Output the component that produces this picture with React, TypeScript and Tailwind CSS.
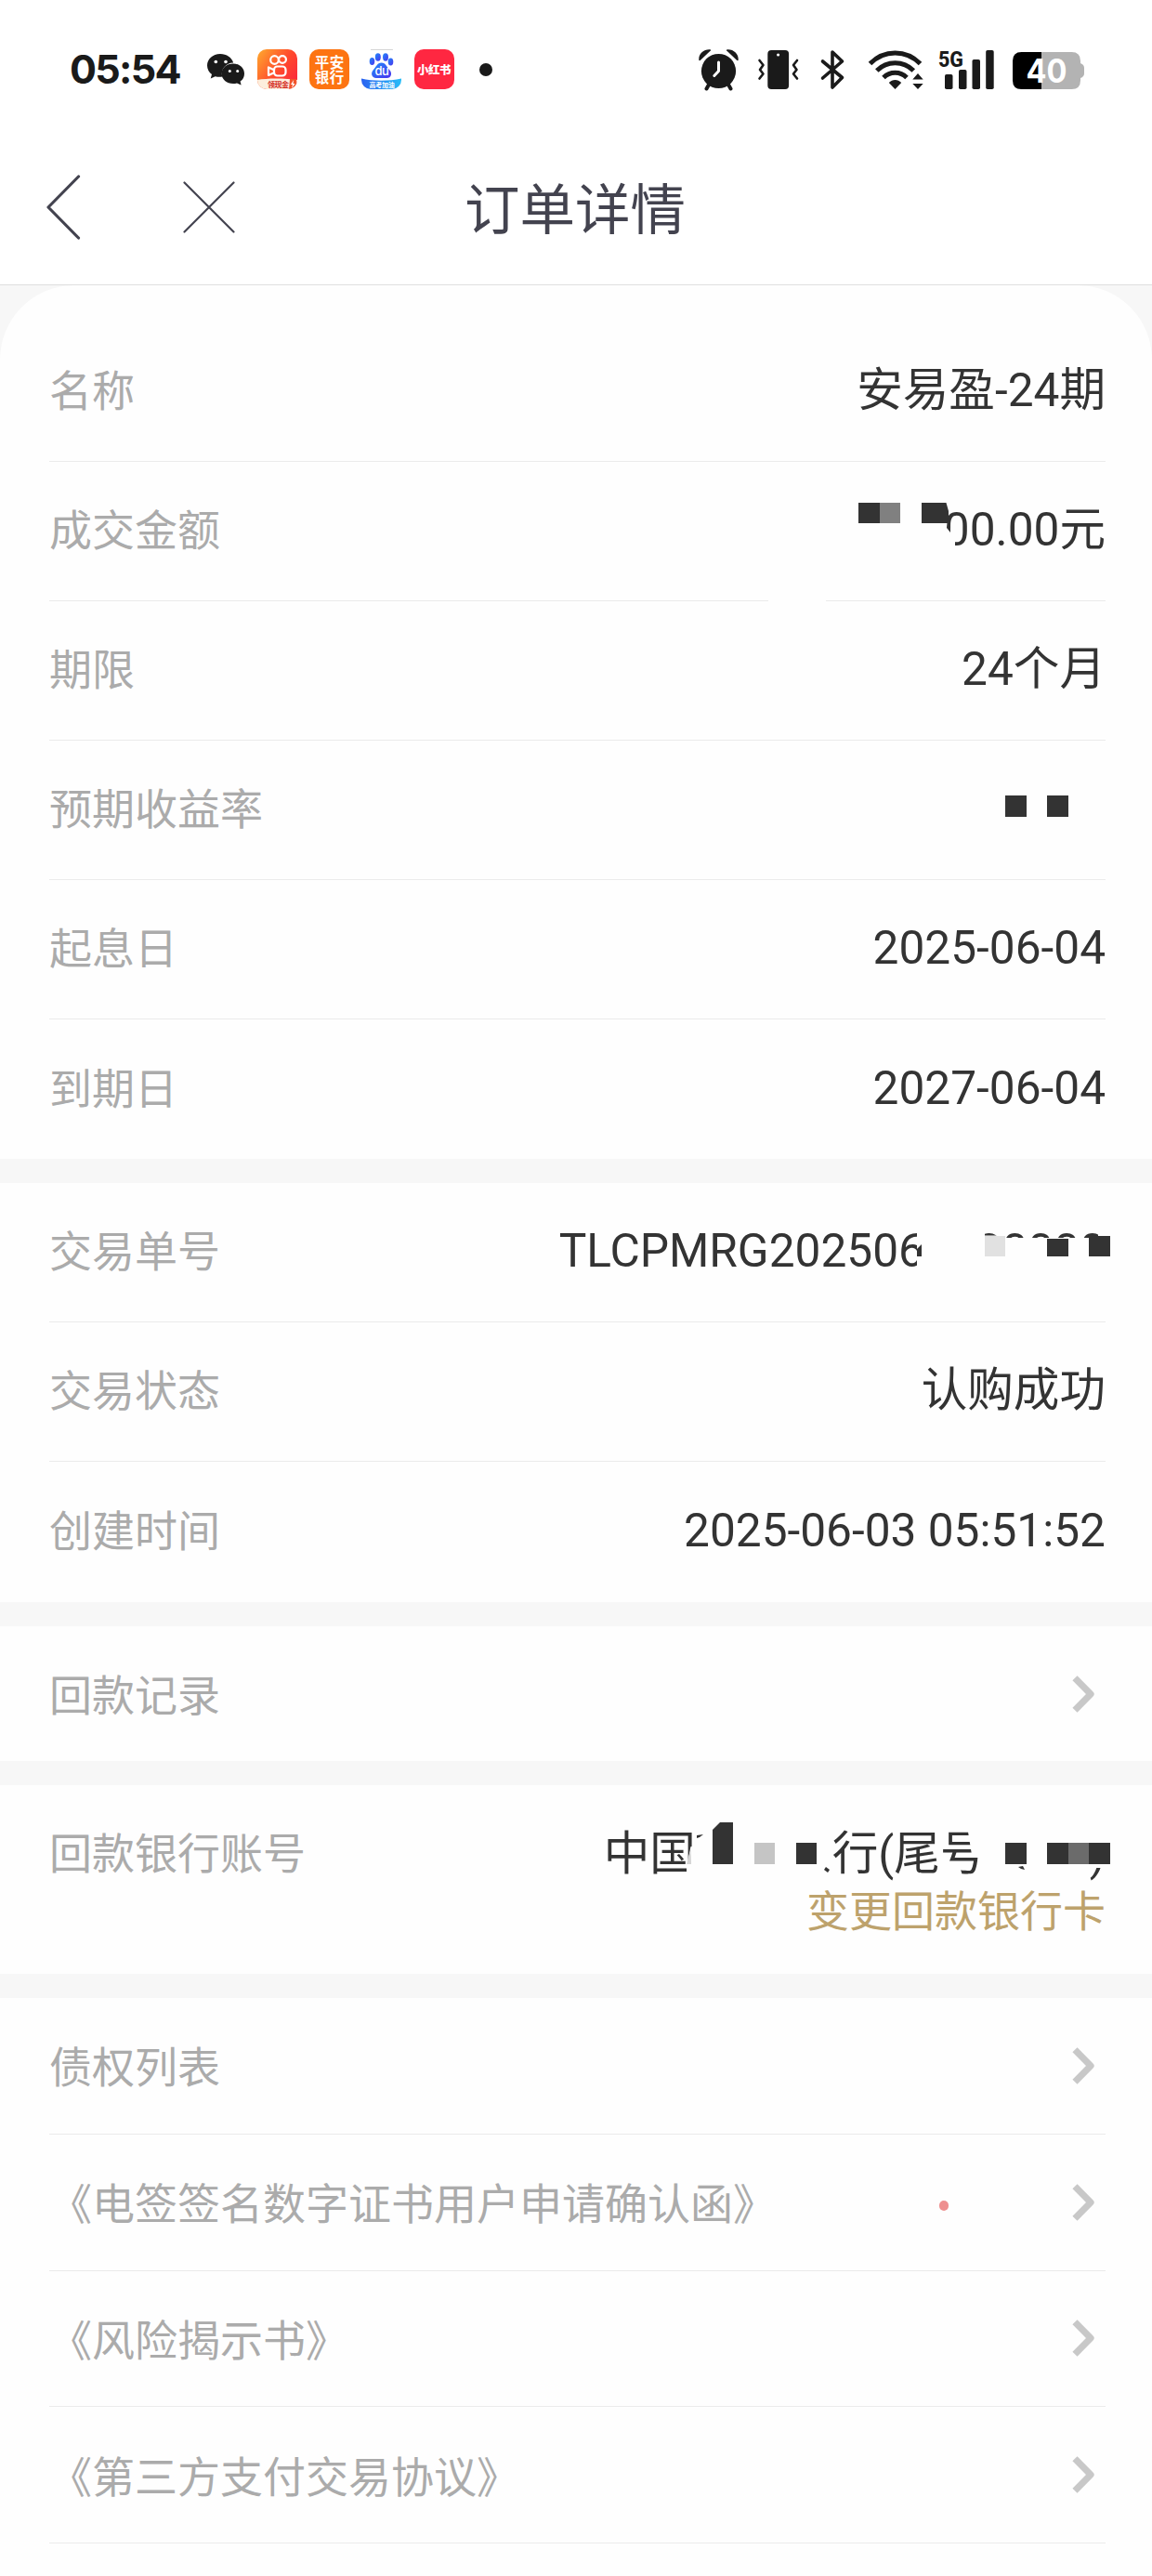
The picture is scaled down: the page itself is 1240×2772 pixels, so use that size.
import React from 'react';

function WeChatIcon() {
  return (
    <svg width="40" height="34" viewBox="223 58 40 34" className="block">
      <path d="M237 58c-8 0-14 5.600-14 12.500 0 4 2 7.300 5 9.500l-1.300 4.500 5-2.300c2.500.8 5.500.8 7.500.4-2-8 4-15 12-15C249.500 62 244 58 237 58z" fill="#1a1a1a" />
      <path d="M251 68.500c-7 0-12.500 4.700-12.500 10.700S244 90 251 90c1.400 0 2.800-.2 4-.6l4.600 2.200-1-4c3-1.900 4.400-5 4.400-8.400 0-6-5-10.700-12-10.700z" fill="#1a1a1a" />
      <circle cx="232.300" cy="66.500" r="1.800" fill="#fff" />
      <circle cx="243" cy="66.500" r="1.800" fill="#fff" />
      <circle cx="247.300" cy="76.500" r="1.500" fill="#fff" />
      <circle cx="255.700" cy="76.500" r="1.500" fill="#fff" />
    </svg>
  );
}

function KuaishouIcon() {
  return (
    <div className="relative h-[43px] w-[43px] overflow-hidden rounded-[10px]">
      <svg width="43" height="43" viewBox="0 0 43 43" className="block">
        <defs>
          <linearGradient id="ks" x1="0" y1="0" x2="1" y2="0.7">
            <stop offset="0" stopColor="#ffab2e" />
            <stop offset="0.6" stopColor="#ff4a2c" />
            <stop offset="1" stopColor="#fb2c3c" />
          </linearGradient>
        </defs>
        <rect width="43" height="43" fill="url(#ks)" />
        <g fill="none" stroke="#fff" strokeWidth="2.200">
          <circle cx="18.500" cy="11.500" r="4.300" />
          <circle cx="27" cy="11" r="3.900" />
          <rect x="18" y="18.500" width="12.500" height="10" rx="3.500" />
          <path d="M17.500 22l-5.500-2.500v8.500l5.500-2.500" strokeLinejoin="round" />
        </g>
        <path d="M0 33c10-2 30-2 43 0v10H0z" fill="#fdeedd" />
      </svg>
      <span className="absolute left-[11px] top-[32px] text-[8px] font-bold leading-[11px] tracking-[-0.5px] text-[#d32619]">领现金</span>
      <svg width="8" height="11" viewBox="0 0 8 11" className="absolute left-[34px] top-[32px]">
        <path d="M1 0h7v9l-3 2H0z" fill="#f2542c" />
        <path d="M5 1L2 6h2l-1 4 3.500-5h-2z" fill="#fff" />
      </svg>
    </div>
  );
}

function PinganIcon() {
  return (
    <div className="flex h-[43px] w-[43px] flex-col items-center justify-center rounded-[10px] bg-[#fd7412] pb-px text-[15.500px] font-bold leading-[16.500px] tracking-[0.500px] text-white">
      <span>平安</span>
      <span>银行</span>
    </div>
  );
}

function BaiduIcon() {
  return (
    <div className="relative h-[43px] w-[43px] overflow-hidden rounded-[10px] bg-white">
      <svg width="43" height="43" viewBox="0 0 43 43" className="block">
        <defs>
          <linearGradient id="paw" x1="0" y1="0" x2="1" y2="1">
            <stop offset="0" stopColor="#1f8bfa" />
            <stop offset="1" stopColor="#4a33ee" />
          </linearGradient>
          <linearGradient id="band" x1="0" y1="0" x2="1" y2="0">
            <stop offset="0" stopColor="#2a62f0" />
            <stop offset="1" stopColor="#27bdf7" />
          </linearGradient>
        </defs>
        <path d="M10 .5h24" stroke="#d5d5d5" strokeWidth="1" />
        <g fill="url(#paw)">
          <ellipse cx="11.500" cy="13" rx="2.800" ry="4" />
          <ellipse cx="17.800" cy="8.500" rx="3" ry="4.200" />
          <ellipse cx="26" cy="8.500" rx="3" ry="4.200" />
          <ellipse cx="31.500" cy="13.500" rx="2.800" ry="4" />
          <path d="M21.500 14.500c5 0 6 5 9 8 3 3.300 1.500 8.500-3 8.500H16c-5 0-6.500-5.500-3-9 3-3 4-7.500 8.500-7.500z" />
        </g>
        <path d="M0 31.500c12 3 30 3 43 0V43H0z" fill="url(#band)" />
      </svg>
      <span className="absolute left-[14px] top-[17px] font-[Inter] text-[13px] font-medium leading-[13px] tracking-[-0.5px] text-white">du</span>
      <span className="absolute left-[8px] top-[33.500px] whitespace-nowrap text-[7px] font-bold leading-[9px] tracking-[-0.200px] text-white">高考加油</span>
    </div>
  );
}

function XhsIcon() {
  return (
    <div className="flex h-[43px] w-[43px] items-center justify-center rounded-[10px] bg-[#ff2741] text-[12.500px] font-black leading-[14px] tracking-[-0.500px] text-white">
      小红书
    </div>
  );
}

function SystemIcons() {
  return (
    <svg width="420" height="60" viewBox="750 44 420 60" className="block">
      <g fill="#1a1a1a">
        <circle cx="773.500" cy="75.500" r="18.600" />
        <path d="M752.300 63.500c-.5-6.500 5-11.500 11.500-11.300 1.800.2 1.500 1.300.2 2.100l-9.500 9c-1 1-2 1.200-2.200.2z" />
        <path d="M794.700 63.500c.5-6.500-5-11.500-11.500-11.300-1.800.2-1.500 1.300-.2 2.100l9.500 9c1 1 2 1.200 2.200.2z" />
      </g>
      <path d="M763 90l-2.500 4.500M784 90l2.500 4.500" stroke="#1a1a1a" strokeWidth="4" strokeLinecap="round" />
      <path d="M773.500 66v9.500l-4.700 5" fill="none" stroke="#fff" strokeWidth="3" strokeLinecap="round" strokeLinejoin="round" />

      <rect x="826.300" y="53" width="22.800" height="42" rx="4" fill="#1a1a1a" />
      <circle cx="837.600" cy="58" r="1.600" fill="#fff" />
      <path d="M817.500 64l4 5-3.500 5 3.500 4.500-4 5M858 64l-4 5 3.500 5-3.500 4.500 4 5" fill="none" stroke="#1a1a1a" strokeWidth="2.600" strokeLinejoin="round" strokeLinecap="round" />

      <path d="M885.500 65l21 17.500-10.500 10.500V55l10.500 10-21 18" fill="none" stroke="#1a1a1a" strokeWidth="3.600" strokeLinejoin="round" strokeLinecap="round" />

      <g fill="none" stroke="#1a1a1a" strokeWidth="5">
        <path d="M936.500 67.500c15-15.500 39-15.500 54 0" />
        <path d="M943.800 75c11-11 28.500-11 39.500 0" />
        <path d="M951 82.500c7-7 18-7 25 0" />
      </g>
      <path d="M963.500 95l-6.700-7c3.700-4 9.700-4 13.400 0z" fill="#1a1a1a" />
      <path d="M988 78l5.700 6.500h-11.400zM988 95l-5.700-6h11.400z" fill="#1a1a1a" />

      <g fill="#1a1a1a">
        <rect x="1017" y="79" width="8.500" height="16" rx="1.800" />
        <rect x="1032" y="74" width="8.500" height="21" rx="1.800" />
        <rect x="1046.500" y="63" width="8.500" height="32" rx="1.800" />
        <rect x="1061.200" y="53" width="8.500" height="42" rx="1.800" />
      </g>
      <text x="1010" y="70.500" fontFamily="Roboto" fontWeight="800" fontSize="24.500" fill="#1a1a1a" textLength="27" lengthAdjust="spacingAndGlyphs">5G</text>

      <path d="M1121 55h32.500q9.500 0 9.500 9.500v2.500q4 1.500 4 5v6q0 3.500-4 5v2.500q0 9.500-9.500 9.500h-32.500z" fill="#b3b3b3" />
      <path d="M1121 55h-21.500q-9.500 0-9.500 9.500v21q0 9.500 9.500 9.500h21.500z" fill="#000" />
      <text x="1104.500" y="88" fontFamily="Inter" fontWeight="700" fontSize="35" fill="#fff" textLength="44" lengthAdjust="spacingAndGlyphs">40</text>
    </svg>
  );
}

function StatusBar() {
  return (
    <div className="flex h-[140px] items-center justify-between pl-[75px] pr-[70px] pt-[9px]">
      <div className="flex items-center">
        <span className="w-[148px] pb-px font-[Inter] text-[43px] font-bold leading-none tracking-[-1.7px] text-[#1a1a1a]">05:54</span>
        <WeChatIcon />
        <div className="ml-[14px] flex gap-[13.200px]">
          <KuaishouIcon />
          <PinganIcon />
          <BaiduIcon />
          <XhsIcon />
        </div>
        <span className="ml-[27px] h-[14px] w-[14px] rounded-full bg-[#1a1a1a]" />
      </div>
      <SystemIcons />
    </div>
  );
}

function Header() {
  return (
    <div className="grid h-[167px] grid-cols-3 items-center border-b border-[#dfdfdf] pb-[1px] text-[#43434f]">
      <div className="flex items-center pl-[49px]">
        <svg width="39" height="72" viewBox="0 0 39 72" className="block" fill="none" stroke="currentColor" strokeWidth="3.200" strokeLinecap="round" strokeLinejoin="round">
          <path d="M35.500 3L3 36l32.500 33" />
        </svg>
        <svg width="56" height="56" viewBox="0 0 56 56" className="ml-[109px] block" fill="none" stroke="currentColor" strokeWidth="2.200" strokeLinecap="round">
          <path d="M1.500 1.500l53 53M54.500 1.500l-53 53" />
        </svg>
      </div>
      <h1 className="-ml-[2px] whitespace-nowrap pb-[4px] text-center text-[59.500px] leading-[70px]">订单详情</h1>
    </div>
  );
}

function Row({ label, children, last, overlay }: { label: string; children: React.ReactNode; last?: boolean; overlay?: React.ReactNode }) {
  return (
    <div className="relative h-[150px] pl-[53px] pr-[50px]">
      <div className={last ? 'flex h-full items-center justify-between' : 'flex h-full items-center justify-between border-b border-[#ebebeb]'}>
        <span className="pb-[9px] text-[46px] leading-[60px] text-[#ababab]">{label}</span>
        <span className="whitespace-pre pb-[3px] font-[Roboto,'Noto_Sans_CJK_SC',sans-serif] text-[49.600px] leading-[60px] text-[#333333]">{children}</span>
      </div>
      {overlay}
    </div>
  );
}

/* Redaction marks laid over a row; coordinates are relative to the row. */
function Marks({ height = 150, children }: { height?: number; children: React.ReactNode }) {
  return (
    <svg className="absolute left-0 top-0 block" width="1240" height={height} viewBox={`0 0 1240 ${height}`}>
      {children}
    </svg>
  );
}

function Chevron() {
  return (
    <svg width="26" height="42" viewBox="0 0 26 42" className="mr-[10px] block" fill="none" stroke="#c8c8c8" strokeWidth="7.200" strokeLinejoin="round">
      <path d="M3 3.800L20 21 3 38.200" />
    </svg>
  );
}

function LinkRow({ label, border, dot }: { label: string; border?: boolean; dot?: boolean }) {
  return (
    <div className={border ? 'ml-[53px] mr-[50px] flex h-[146.750px] items-center border-b border-[#ebebeb]' : 'ml-[53px] mr-[50px] flex h-[145px] items-center'}>
      <span className="pb-[3px] text-[46px] leading-[60px] text-[#ababab]">{label}</span>
      <span className="flex-1" />
      {dot && <span className="mr-[133px] mt-[8px] h-[10.500px] w-[10.500px] rounded-full bg-[#ee8f8f]" />}
      <Chevron />
    </div>
  );
}

function Gap() {
  return <div className="h-[26px] bg-[#f7f7f7]" />;
}

export default function App() {
  return (
    <div className="h-[2772px] w-[1240px] overflow-hidden bg-white font-['Noto_Sans_CJK_SC',sans-serif]">
      <StatusBar />
      <Header />
      <div className="bg-[#f7f7f7]">
        <div className="rounded-t-[80px] bg-[#fefefe] pt-[40px]">
          <Row label="名称">安易盈-24期</Row>
          <Row
            label="成交金额"
            overlay={
              <Marks>
                <rect x="827" y="148" width="62" height="2" fill="#fefefe" />
                <path d="M1014 44h4l4 24 6 12v14h-14z" fill="#fefefe" />
                <rect x="924" y="44" width="23" height="22" fill="#333" />
                <rect x="947" y="44" width="22" height="22" fill="#808080" />
                <path d="M992 44h26.500l2.500 9v13h-29z" fill="#333" />
                <path d="M1020 60l-1 11 4 5v-14z" fill="#333" />
              </Marks>
            }
          >
            00.00元
          </Row>
          <Row label="期限">24个月</Row>
          <Row
            label="预期收益率"
            overlay={
              <Marks>
                <rect x="1082" y="59" width="23" height="23" fill="#333" />
                <rect x="1127" y="59" width="23" height="23" fill="#333" />
              </Marks>
            }
          >
            {''}
          </Row>
          <Row label="起息日">2025-06-04</Row>
          <Row label="到期日" last>2027-06-04</Row>
        </div>
      </div>
      <Gap />
      <div className="bg-[#fefefe]">
        <Row
          label="交易单号"
          overlay={
            <Marks>
              <path d="M987 50h73v6.500h12V59h123v40H987z" fill="#fefefe" />
              <path d="M987 71l5-5v13h-5z" fill="#333" />
              <rect x="1060" y="57" width="22" height="22" fill="#e1e1e1" />
              <rect x="1127" y="60" width="23" height="19" fill="#333" />
              <rect x="1182" y="50" width="13" height="7" fill="#fefefe" />
              <rect x="1172" y="57" width="23" height="22" fill="#333" />
            </Marks>
          }
        >
          TLCPMRG2025060000000
        </Row>
        <Row label="交易状态">认购成功</Row>
        <div className="h-[151px]">
          <Row label="创建时间" last>2025-06-03 05:51:52</Row>
        </div>
      </div>
      <Gap />
      <div className="bg-[#fefefe]">
        <LinkRow label="回款记录" />
      </div>
      <Gap />
      <div className="relative h-[203px] bg-[#fefefe] pl-[53px] pr-[50px] pt-[39px]">
        <div className="flex h-[62px] justify-between leading-[62px]">
          <span className="text-[46px] text-[#ababab]">回款银行账号</span>
          <span className="flex pt-[4px] font-[Roboto,'Noto_Sans_CJK_SC',sans-serif] text-[49.600px] text-[#333333]">
            <span className="w-[246px]">中国</span>
            <span className="w-[277px]">行(尾号</span>
            <span>)</span>
          </span>
        </div>
        <div className="text-right text-[46px] leading-[62px] text-[#bda26c]">变更回款银行卡</div>
        <Marks height={203}>
          <path d="M743.500 66l-4.500 22v12h12V66z" fill="#fefefe" />
          <path d="M743.500 69l-4.500 16h5z" fill="#d5d5d5" />
          <path d="M750 54l7-1-4 3-3 1z" fill="#333" />
          <path d="M767 48l8-8h14v45h-22z" fill="#333" />
          <rect x="812" y="62" width="22" height="23" fill="#c5c5c5" />
          <rect x="857" y="62" width="22" height="23" fill="#333" />
          <path d="M889 88l4 3-2 3-4-3z" fill="#333" />
          <path d="M1041 44l5 31h7l-2 24h14V44z" fill="#fefefe" />
          <rect x="1066" y="40" width="124" height="49" fill="#fefefe" />
          <rect x="1082" y="62" width="23" height="23" fill="#333" />
          <rect x="1127" y="62" width="23" height="23" fill="#333" />
          <rect x="1150" y="62" width="22" height="23" fill="#6b6b6b" />
          <rect x="1172" y="62" width="23" height="23" fill="#333" />
          <path d="M1096 88l5-1 2 4-4-1z" fill="#333" />
        </Marks>
      </div>
      <Gap />
      <div className="bg-[#fefefe]">
        <LinkRow label="债权列表" border />
        <LinkRow label="《电签签名数字证书用户申请确认函》" border dot />
        <LinkRow label="《风险揭示书》" border />
        <LinkRow label="《第三方支付交易协议》" border />
        <div className="h-[40px]" />
      </div>
    </div>
  );
}
